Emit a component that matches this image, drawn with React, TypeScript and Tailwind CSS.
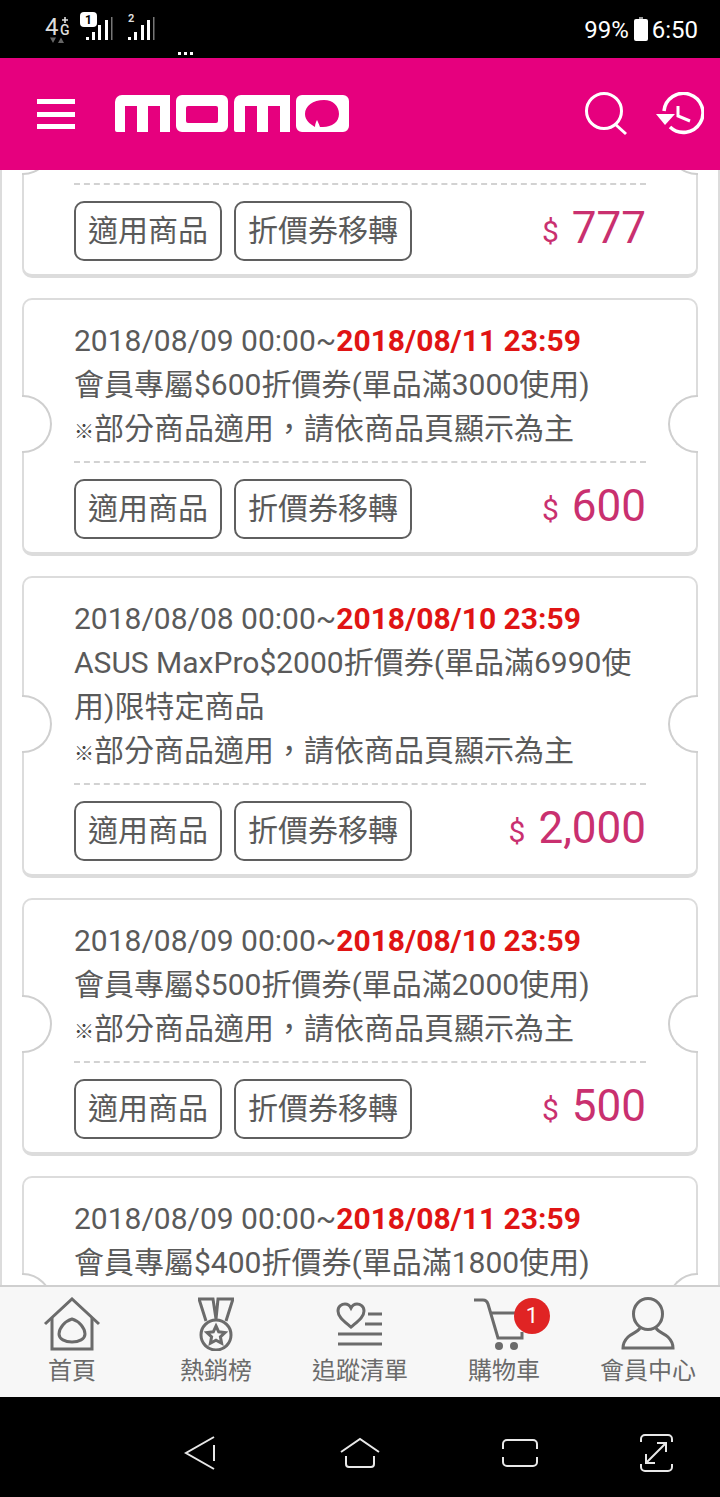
const rule = '※部分商品適用，請依商品頁顯示為主'

// the first and last coupons are scrolled partly out of view, so only their visible lines are listed
const coupons = [
  { from: '', to: '', lines: [], note: false, amount: '777' },
  { from: '2018/08/09 00:00~', to: '2018/08/11 23:59', lines: ['會員專屬$600折價券(單品滿3000使用)'], note: true, amount: '600' },
  { from: '2018/08/08 00:00~', to: '2018/08/10 23:59', lines: ['ASUS MaxPro$2000折價券(單品滿6990使用)限特定商品'], note: true, amount: '2,000' },
  { from: '2018/08/09 00:00~', to: '2018/08/10 23:59', lines: ['會員專屬$500折價券(單品滿2000使用)'], note: true, amount: '500' },
  { from: '2018/08/09 00:00~', to: '2018/08/11 23:59', lines: ['會員專屬$400折價券(單品滿1800使用)'], note: false, amount: '400' },
]

function StatusBar() {
  return (
    <div className="relative flex h-[58px] items-start justify-between bg-black pl-[44px] pr-[22px] text-white">
      <div className="pt-[10px]">
        <svg width="112" height="36" viewBox="0 0 112 36" className="block" fontFamily="Roboto, sans-serif">
          <text x="1" y="25" fontSize="24" fill="#ddd">4</text>
          <text x="16" y="25" fontSize="14" fontWeight="500" fill="#ddd">G</text>
          <path d="M18 10h6M21 7v6" stroke="#ddd" strokeWidth="1.6" />
          <path d="M6 27.500h6L9 33zM14 33h6l-3-5.500z" fill="#666" />
          <rect x="36" y="2" width="17" height="15" rx="4" fill="#fff" />
          <text x="44.500" y="14" fontSize="12" fontWeight="700" fill="#000" textAnchor="middle">1</text>
          <g fill="#fff">
            <rect x="42" y="27" width="3" height="3" />
            <rect x="48" y="22" width="3" height="8" />
            <rect x="54" y="15" width="3" height="15" />
            <rect x="61" y="10" width="3" height="20" />
            <rect x="84" y="27" width="3" height="3" />
            <rect x="90" y="22" width="3" height="8" />
            <rect x="97" y="15" width="3" height="15" />
            <rect x="103" y="10" width="3" height="20" />
          </g>
          <rect x="67" y="7" width="1.500" height="23" fill="#777" />
          <rect x="109" y="7" width="1.500" height="23" fill="#777" />
          <text x="84" y="12" fontSize="11" fontWeight="700" fill="#ddd">2</text>
        </svg>
      </div>
      <div className="flex items-center pt-[11px] text-[24px] leading-[38px]">
        <span>99%</span>
        <span className="relative ml-[5px] mr-[4px] block h-[22px] w-[14px] rounded-[2px] bg-white">
          <span className="absolute -top-[2px] left-[5px] h-[2px] w-[4px] bg-[#999]" />
        </span>
        <span>6:50</span>
      </div>
      <div className="absolute bottom-[3px] left-[178px] flex gap-[3px]">
        <span className="h-[3px] w-[3px] bg-white" />
        <span className="h-[3px] w-[3px] bg-white" />
        <span className="h-[3px] w-[3px] bg-white" />
      </div>
    </div>
  )
}

function Logo() {
  return (
    <svg width="235" height="37" viewBox="0 0 235 37" className="block" fill="#fff">
      <path d="M1 7a7 7 0 0 1 7-7h48v37H46V11H34v26H23V11H11v26H3a2 2 0 0 1-2-2z" />
      <path fillRule="evenodd" d="M68 0h40a6 6 0 0 1 6 6v25a6 6 0 0 1-6 6H68a6 6 0 0 1-6-6V6a6 6 0 0 1 6-6zm6 11a2 2 0 0 0-2 2v13a2 2 0 0 0 2 2h28a2 2 0 0 0 2-2V13a2 2 0 0 0-2-2z" />
      <path d="M120 7a7 7 0 0 1 7-7h49v37h-10V11h-12v26h-11V11h-12v26h-9a2 2 0 0 1-2-2z" />
      <path fillRule="evenodd" d="M188 0h41a6 6 0 0 1 6 6v25a6 6 0 0 1-6 6h-41a6 6 0 0 1-6-6V6a6 6 0 0 1 6-6zm22 5c9 0 15 6 15 14 0 8-7 13-16 13h-3c-1-3-2-5-3-7-1 2-2 4-2 7-5-3-10-7-10-13 0-8 8-14 19-14z" />
    </svg>
  )
}

function Header() {
  return (
    <header className="flex h-[112px] items-center bg-[#e6007e] pl-[37px] pr-[16px] text-white">
      <div className="flex h-[30px] w-[38px] flex-col justify-between">
        <span className="h-[5px] bg-white" />
        <span className="h-[5px] bg-white" />
        <span className="h-[5px] bg-white" />
      </div>
      <div className="ml-[39px] -mt-[1px]">
        <Logo />
      </div>
      <div className="ml-auto flex items-center gap-[26px]">
        <svg width="44" height="44" viewBox="0 0 44 44" fill="none" stroke="#fff" strokeWidth="3" className="block">
          <circle cx="20" cy="19" r="17.500" />
          <path d="M31 32l11 10" />
        </svg>
        <svg width="50" height="44" viewBox="0 0 50 44" fill="none" stroke="#fff" strokeWidth="3.500" className="block">
          <path d="M10 19A19.500 19.500 0 1 1 16 35" />
          <path d="M2 22h19L11 33z" fill="#fff" stroke="none" />
          <path d="M24 14v10l12 5" strokeWidth="3" />
        </svg>
      </div>
    </header>
  )
}

function CouponCard({ from, to, lines, note, amount }: (typeof coupons)[number]) {
  return (
    <article className="relative mb-[20px] rounded-[10px] border-2 border-b-4 border-[#dcdcdc] bg-white pb-[13px] pl-[50px] pr-[50px] pt-[19px]">
      <span className="absolute -left-[2px] top-1/2 -mt-[2px] h-[58px] w-[30px] -translate-y-1/2 rounded-r-full border-2 border-l-0 border-[#cfcfcf] bg-white" />
      <span className="absolute -right-[2px] top-1/2 -mt-[2px] h-[58px] w-[30px] -translate-y-1/2 rounded-l-full border-2 border-r-0 border-[#cfcfcf] bg-white" />
      <div className="min-h-[132px] text-[30px] leading-[44px] text-[#5a5a5a]">
        {from && (
          <p className="whitespace-nowrap">
            {from}
            <span className="font-bold text-[#e01414]">{to}</span>
          </p>
        )}
        {lines.map((line) => (
          <p key={line}>{line}</p>
        ))}
        {note && (
          <p>
            <span className="text-[20px] font-bold leading-none text-[#444]">{rule.slice(0, 1)}</span>
            {rule.slice(1)}
          </p>
        )}
      </div>
      <div className="mt-[10px] border-t-2 border-dashed border-[#d2d2d2] pt-[16px]">
        <div className="flex items-center gap-[12px]">
          <button className="h-[60px] w-[148px] rounded-[10px] border-2 border-[#5f5f5f] pb-[2px] text-[30px] text-[#5a5a5a]">適用商品</button>
          <button className="h-[60px] w-[178px] rounded-[10px] border-2 border-[#5f5f5f] pb-[2px] text-[30px] text-[#5a5a5a]">折價券移轉</button>
          <div className="ml-auto flex items-center pb-[6px] text-[#c9306f]">
            <span className="mr-[13px] mt-[6px] text-[30px]">$</span>
            <span className="text-[44px] leading-[54px]">{amount}</span>
          </div>
        </div>
      </div>
    </article>
  )
}

function NavIcon({ name }: { name: string }) {
  const stroke = { fill: 'none', stroke: '#6b6b6b', strokeWidth: 3, className: 'block' }
  if (name === 'home')
    return (
      <svg width="60" height="54" viewBox="0 0 60 54" {...stroke}>
        <path d="M3 27L30 2l27 25" />
        <path d="M10 21v31h40V21" />
        <path d="M30 22C23 24 17 31 17 37 17 42 23 45 30 45 37 45 43 42 43 37 43 31 37 24 30 22z" />
      </svg>
    )
  if (name === 'medal')
    return (
      <svg width="36" height="54" viewBox="0 0 36 54" {...stroke}>
        <path d="M8 24L1 2h14l3 20M28 24l7-22H20l-2 20" />
        <circle cx="18" cy="38" r="15" />
        <path d="M18 29l2.700 5.800 6.300 0.800-4.600 4.300 1.200 6.300-5.600-3.100-5.600 3.100 1.200-6.300L9 35.600l6.300-0.800z" />
      </svg>
    )
  if (name === 'list')
    return (
      <svg width="48" height="54" viewBox="0 0 48 54" {...stroke}>
        <path d="M15 30C8 24 2 20 2 14c0-5 4-7 7-7 3 0 5 2 6 4 1-2 3-4 6-4 3 0 7 2 7 7 0 6-6 10-13 16z" />
        <path d="M32 17h14M29 27h17M2 37h44M2 47h44" />
      </svg>
    )
  if (name === 'cart')
    return (
      <svg width="60" height="54" viewBox="0 0 60 54" {...stroke}>
        <path d="M0 3h9c3 0 4 1 5 4l10 34h24v-6" />
        <path d="M17 16h24" />
        <circle cx="25" cy="49" r="4" fill="#6b6b6b" stroke="none" />
        <circle cx="40" cy="49" r="4" fill="#6b6b6b" stroke="none" />
      </svg>
    )
  return (
    <svg width="54" height="54" viewBox="0 0 54 54" {...stroke}>
      <ellipse cx="27" cy="17" rx="14.500" ry="15.500" />
      <path d="M19 31c-2 4-9 6-12 9-3 3-5 7-5 11h50c0-4-2-8-5-11-3-3-10-5-12-9" />
    </svg>
  )
}

const navItems = [
  { name: 'home', label: '首頁' },
  { name: 'medal', label: '熱銷榜' },
  { name: 'list', label: '追蹤清單' },
  { name: 'cart', label: '購物車', badge: 1 },
  { name: 'user', label: '會員中心' },
]

function BottomNav() {
  return (
    <nav className="grid h-[112px] grid-cols-5 border-t-2 border-[#cfcfcf] bg-[#f7f7f7]">
      {navItems.map((item) => (
        <div key={item.name} className="flex flex-col items-center pt-[10px]">
          <div className="relative h-[54px]">
            <NavIcon name={item.name} />
            {item.badge && (
              <span className="absolute left-[40px] top-[1px] h-[36px] w-[36px] rounded-full bg-[#e02424] text-center text-[22px] leading-[36px] text-white">
                {item.badge}
              </span>
            )}
          </div>
          <span className="mt-[4px] text-[24px] leading-[32px] text-[#6b6b6b]">{item.label}</span>
        </div>
      ))}
    </nav>
  )
}

function SystemNav() {
  const line = { fill: 'none', stroke: '#e8e8e8', strokeWidth: 2, className: 'block' }
  return (
    <div className="flex h-[100px] items-center bg-black pl-[184px] pt-[12px]">
      <svg width="32" height="34" viewBox="0 0 32 34" {...line}>
        <path d="M30 1L2 17l28 16M30 9v16" />
      </svg>
      <svg width="40" height="32" viewBox="0 0 40 32" {...line} style={{ marginLeft: 124 }}>
        <path d="M1 15L20 2l19 13" />
        <path d="M6 19v8a3 3 0 0 0 3 3h22a3 3 0 0 0 3-3v-8" />
      </svg>
      <svg width="36" height="28" viewBox="0 0 36 28" {...line} style={{ marginLeft: 122 }}>
        <path d="M1 10V5a4 4 0 0 1 4-4h26a4 4 0 0 1 4 4v5M1 18v5a4 4 0 0 0 4 4h26a4 4 0 0 0 4-4v-5" />
      </svg>
      <svg width="33" height="38" viewBox="0 0 33 38" {...line} style={{ marginLeft: 102 }}>
        <path d="M1 8V5a4 4 0 0 1 4-4h23a4 4 0 0 1 4 4v3M1 30v3a4 4 0 0 0 4 4h23a4 4 0 0 0 4-4v-3" />
        <path d="M6 29L26 9M17 9h9v9M6 20v9h9" />
      </svg>
    </div>
  )
}

export default function App() {
  return (
    <div className="h-[1497px] w-[720px] overflow-hidden bg-white font-['Roboto','Noto_Sans_CJK_TC',sans-serif]">
      <StatusBar />
      <Header />
      <main className="h-[1115px] overflow-hidden border-x-2 border-[#dcdcdc] px-[20px]">
        <div className="-mt-[150px]">
          {coupons.map((c) => (
            <CouponCard key={c.amount} {...c} />
          ))}
        </div>
      </main>
      <BottomNav />
      <SystemNav />
    </div>
  )
}
